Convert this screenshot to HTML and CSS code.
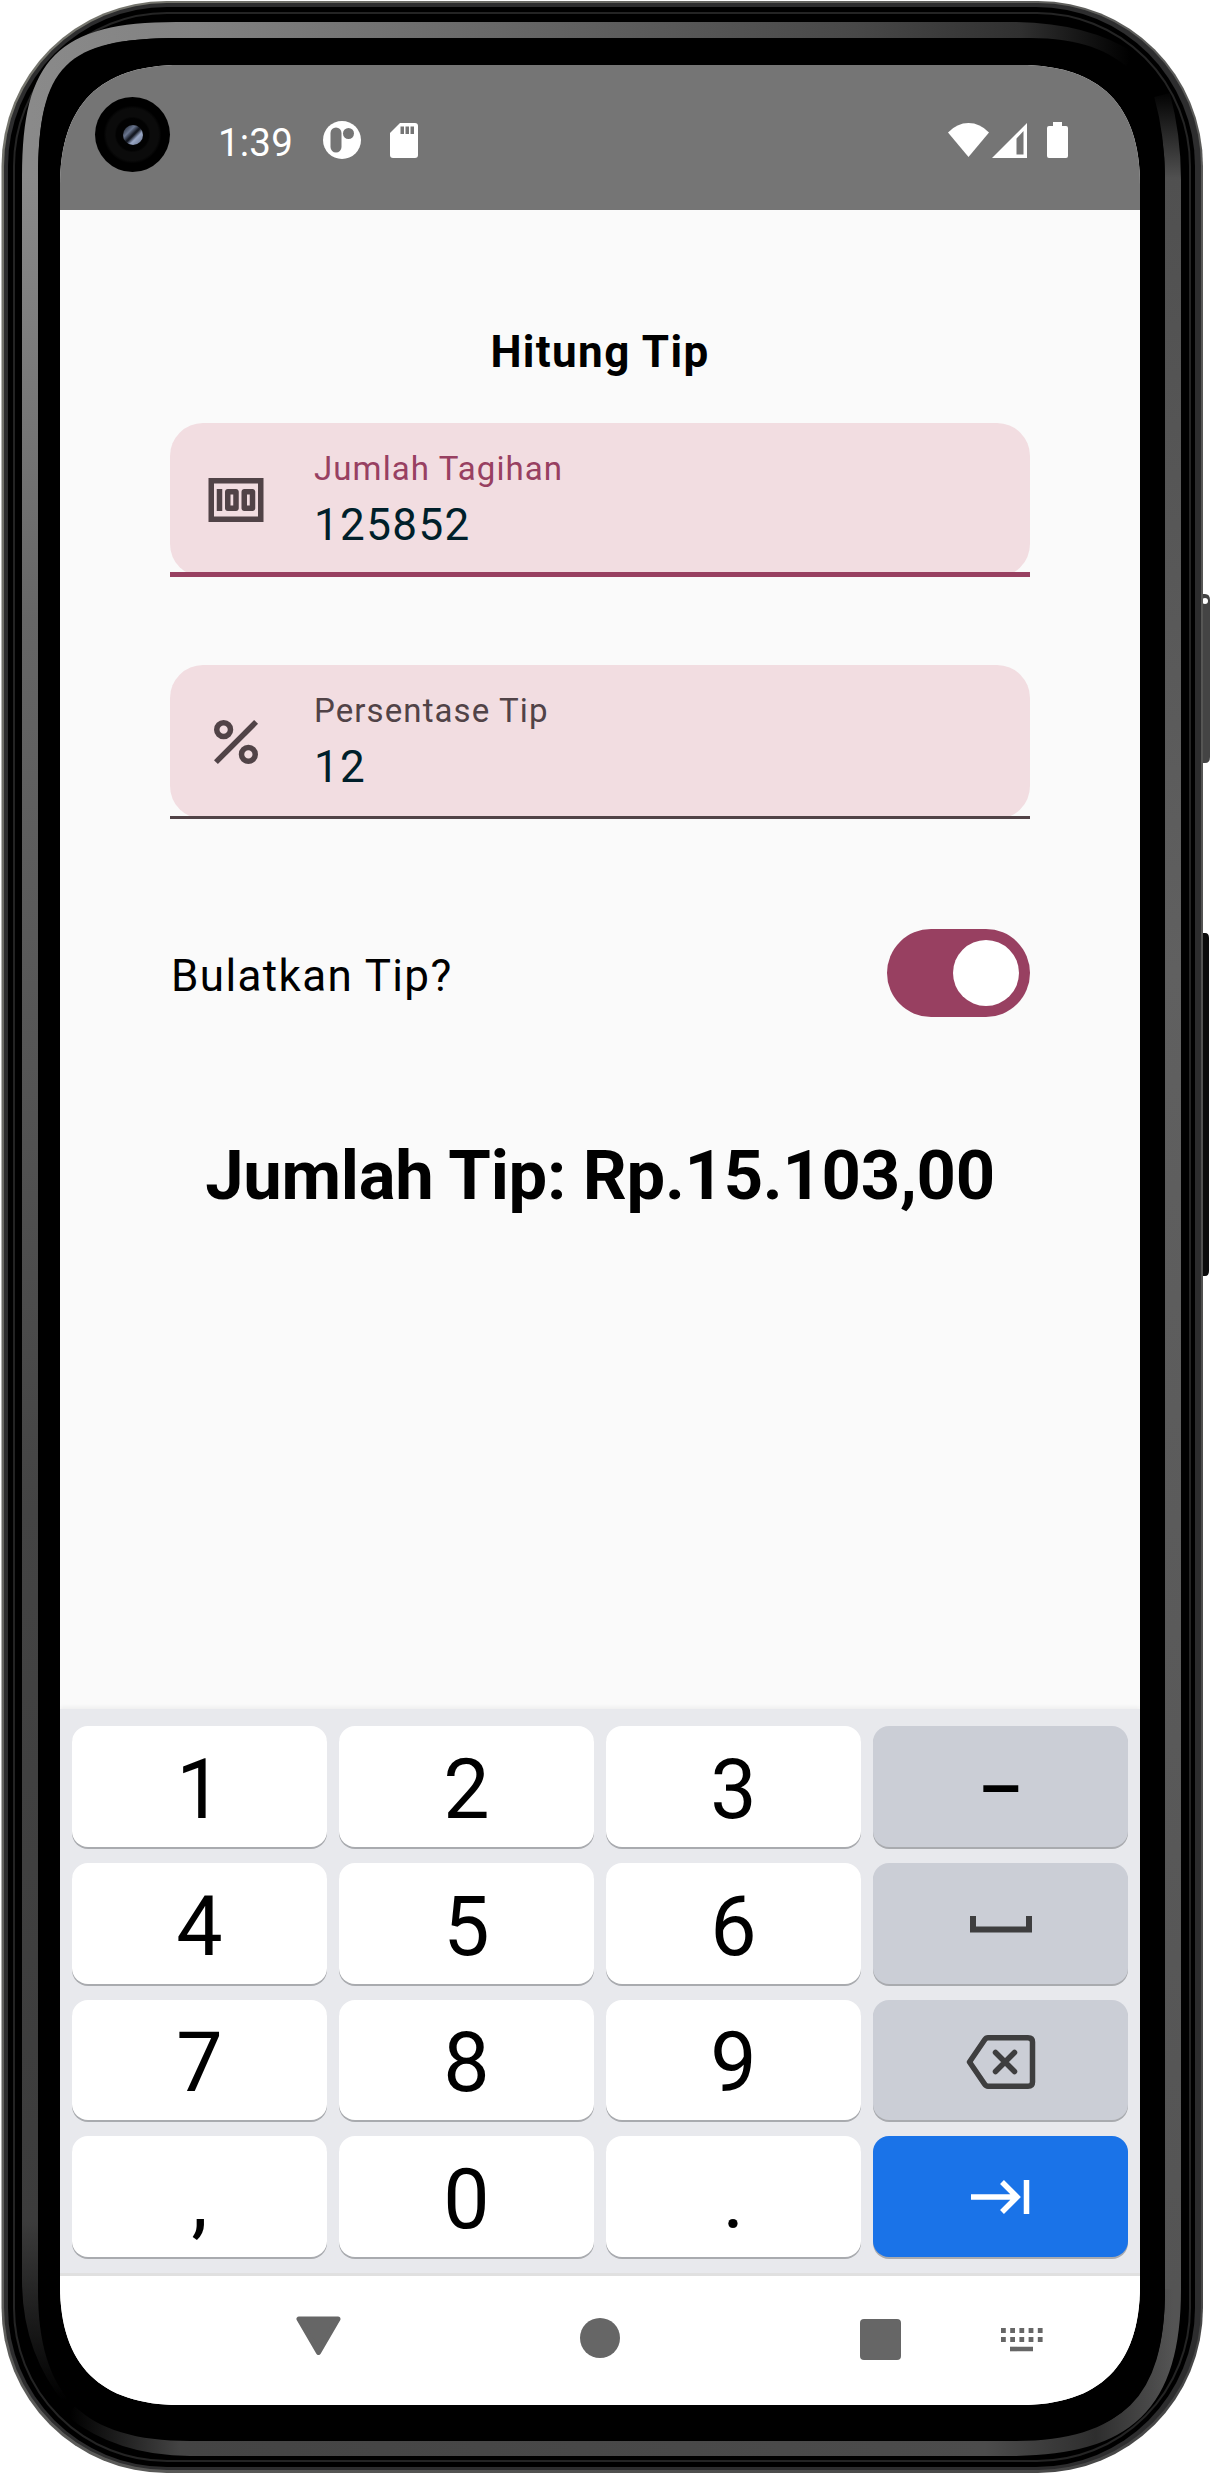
FILE: index.html
```html
<!DOCTYPE html>
<html lang="id">
<head>
<meta charset="utf-8">
<title>Hitung Tip</title>
<link rel="stylesheet" href="styles.css">
</head>
<body>
<div class="device">
  <svg class="bezel" viewBox="0 0 1211 2474" aria-hidden="true">
    <defs>
      <linearGradient id="edge" x1="0" y1="0" x2="1" y2="1">
        <stop offset="0" stop-color="#77776f"/><stop offset="0.5" stop-color="#5c5c5a"/><stop offset="1" stop-color="#454545"/>
      </linearGradient>
      <linearGradient id="left" gradientUnits="userSpaceOnUse" x1="0" y1="175" x2="0" y2="2400">
        <stop offset="0" stop-color="#8a8a8a"/><stop offset="0.2" stop-color="#666"/><stop offset="0.6" stop-color="#444"/><stop offset="0.92" stop-color="#3c3c3c"/><stop offset="1" stop-color="#000"/>
      </linearGradient>
      <linearGradient id="top" gradientUnits="userSpaceOnUse" x1="30" y1="0" x2="1130" y2="0">
        <stop offset="0" stop-color="#8a8a8a"/><stop offset="0.15" stop-color="#828282"/><stop offset="0.4" stop-color="#6a6a6a"/><stop offset="0.75" stop-color="#484848"/><stop offset="0.9" stop-color="#303030"/><stop offset="1" stop-color="#000"/>
      </linearGradient>
      <linearGradient id="right" gradientUnits="userSpaceOnUse" x1="0" y1="90" x2="0" y2="2290">
        <stop offset="0" stop-color="#000"/><stop offset="0.04" stop-color="#505050"/><stop offset="0.4" stop-color="#606060"/><stop offset="1" stop-color="#545454"/>
      </linearGradient>
      <linearGradient id="bottom" gradientUnits="userSpaceOnUse" x1="70" y1="0" x2="1173" y2="0">
        <stop offset="0" stop-color="#000"/><stop offset="0.1" stop-color="#444"/><stop offset="0.83" stop-color="#4c4c4c"/><stop offset="0.93" stop-color="#2e2e2e"/><stop offset="1" stop-color="#545454"/>
      </linearGradient>
    </defs>
    <path d="M1200 594h5q5 0 5 6v157q0 6-5 6h-5z" fill="#444"/>
    <circle cx="1205" cy="601" r="3" fill="#fff"/>
    <path d="M1200 933h5q4 0 4 5v333q0 5-4 5h-5z" fill="#0b0b0b"/>
    <rect x="1.500" y="1" width="1201.500" height="2472" rx="165" fill="url(#edge)"/>
    <rect x="4" y="3" width="1197" height="2467" rx="163" fill="#2d2d2e"/>
    <rect x="8" y="7" width="1187" height="2460" rx="159" fill="#000"/>
    <rect x="14" y="13" width="1176" height="2448" rx="153" fill="none" stroke="#242424" stroke-width="2"/>
    <g fill="none" stroke-width="16">
      <path d="M72 2400Q30 2350 30 2280V175" stroke="url(#left)"/>
      <path d="M30 176C30 63 63 30 176 30H1010Q1085 30 1130 60" stroke="url(#top)"/>
      <path d="M1162 95Q1173 135 1173 180V2290" stroke="url(#right)"/>
      <path d="M72 2410Q120 2448 190 2448H1010C1128 2448 1173 2403 1173 2289" stroke="url(#bottom)"/>
    </g>
    <path d="M38 180C38 65 65 38 180 38H1030C1125 38 1165 85 1165 180V2290C1165 2396 1120 2441 1015 2441H190C83 2441 38 2396 38 2290Z" fill="#000"/>
  </svg>

  <div class="screen">
    <header class="status">
      <div class="camera"><span class="lens"></span></div>
      <span class="clock">1:39</span>
      <svg class="notice" viewBox="0 0 38 38"><circle cx="19" cy="19" r="19" fill="#fff"/><rect x="7.500" y="6.500" width="11" height="25" rx="5.500" fill="#757575"/><circle cx="25.500" cy="12.500" r="5.500" fill="#757575"/></svg>
      <svg class="sdcard" viewBox="0 0 28 35"><path d="M10 0H25Q28 0 28 3V32Q28 35 25 35H3Q0 35 0 32V10Z" fill="#fff"/><path d="M10.500 3.500h3.500v7.500h-3.500zM15.500 3.500h3.500v7.500h-3.500zM20.500 3.500h3.500v7.500h-3.500z" fill="#757575"/></svg>
      <svg class="wifi" viewBox="0 0 41 34"><path d="M0 9.500Q9 0 20.500 0T41 9.500L20.500 34Z" fill="#fff"/></svg>
      <svg class="signal" viewBox="0 0 35 35"><path d="M35 0V35H0ZM31.500 8L24.500 15.500V31.500H31.500Z" fill="#fff" fill-rule="evenodd"/></svg>
      <svg class="battery" viewBox="0 0 21 36"><path d="M6 0h9v4h4q2 0 2 2v28q0 2-2 2H2q-2 0-2-2V6q0-2 2-2h4z" fill="#fff"/></svg>
    </header>

    <main class="content">
      <h1 class="title">Hitung Tip</h1>
      <div class="field focused">
        <svg class="field-icon" viewBox="0 0 24 24"><path fill="currentColor" d="M5 8h2v8H5zm7 0H9c-.55 0-1 .45-1 1v6c0 .55.45 1 1 1h3c.55 0 1-.45 1-1V9c0-.55-.45-1-1-1zm-1 6h-1v-4h1v4zm7-6h-3c-.55 0-1 .45-1 1v6c0 .55.45 1 1 1h3c.55 0 1-.45 1-1V9c0-.55-.45-1-1-1zm-1 6h-1v-4h1v4zM2 4v16h20V4H2zm2 14V6h16v12H4z"/></svg>
        <div class="field-text"><span class="label">Jumlah Tagihan</span><span class="value">125852</span></div>
      </div>
      <div class="field">
        <svg class="field-icon" viewBox="0 0 24 24"><g fill="none" stroke="currentColor" stroke-width="2"><circle cx="7.500" cy="7.500" r="2.500"/><circle cx="16.500" cy="16.500" r="2.500"/><path d="M4.700 19.300L19.300 4.700"/></g></svg>
        <div class="field-text"><span class="label">Persentase Tip</span><span class="value">12</span></div>
      </div>
      <div class="round-row">
        <span class="round-label">Bulatkan Tip?</span>
        <span class="switch"><span class="thumb"></span></span>
      </div>
      <p class="result">Jumlah Tip: Rp.15.103,00</p>
    </main>

    <section class="keypad">
      <div class="key">1</div><div class="key">2</div><div class="key">3</div>
      <div class="key alt"><span class="dash">–</span></div>
      <div class="key">4</div><div class="key">5</div><div class="key">6</div>
      <div class="key alt"><svg class="space-icon" viewBox="0 0 62 17"><path d="M3 0V13.500H59V0" fill="none" stroke="#3e3e3f" stroke-width="6"/></svg></div>
      <div class="key">7</div><div class="key">8</div><div class="key">9</div>
      <div class="key alt"><svg class="back-icon" viewBox="0 0 70 54"><g fill="none" stroke="#3e3e3f" stroke-width="5.500" stroke-linejoin="round" stroke-linecap="round"><path d="M22 2.750H62Q66.500 2.750 66.500 7V47Q66.500 51.250 62 51.250H22Q20 51.250 18.500 49L3.500 27L18.500 5Q20 2.750 22 2.750Z"/><path d="M29.500 17.500L48.500 36.500M48.500 17.500L29.500 36.500"/></g></svg></div>
      <div class="key">,</div><div class="key">0</div><div class="key">.</div>
      <div class="key go"><svg class="next-icon" viewBox="0 0 59 34"><path d="M0 17H45M31 2L46 17L31 32M55.500 0V34" fill="none" stroke="#fff" stroke-width="5.500"/></svg></div>
    </section>

    <nav class="navbar">
      <svg class="nav-back" viewBox="0 0 45 40"><path d="M3 3H42L22.500 36.500Z" fill="#666" stroke="#666" stroke-width="5" stroke-linejoin="round"/></svg>
      <span class="nav-home"></span>
      <span class="nav-recent"></span>
      <svg class="nav-ime" viewBox="0 0 42 24"><path d="M0 2.500H42M0 11.500H42" stroke="#666" stroke-width="4.800" stroke-dasharray="4.800 4.400"/><path d="M9 21H32" stroke="#666" stroke-width="4.600"/></svg>
    </nav>
  </div>
</div>
</body>
</html>
```
FILE: styles.css
```css
* { box-sizing: border-box; }
body { margin: 0; background: #fff; font-family: Roboto, sans-serif; color: #000; }
svg { display: block; flex: none; }

.device { position: relative; width: 1211px; height: 2474px; padding: 65px 71px 69px 60px; overflow: hidden; }
.bezel { position: absolute; inset: 0; width: 1211px; height: 2474px; }

.screen {
  position: relative; display: flex; flex-direction: column;
  width: 1080px; height: 2340px; background: #fafafa;
  clip-path: path("M0 120C0 40 40 0 120 0H960C1040 0 1080 40 1080 120V2220C1080 2300 1040 2340 960 2340H120C40 2340 0 2300 0 2220Z");
}

.status { display: flex; height: 145px; flex: none; background: #757575; padding: 32px 72px 0 35px; }
.camera { display: flex; align-items: center; justify-content: center; width: 75px; height: 75px; border-radius: 50%; background: radial-gradient(circle, #020202 0 16px, #0b0b0b 18px 26px, #000 29px); }
.lens { width: 20px; height: 20px; border-radius: 50%; background: linear-gradient(135deg, #3a4252 0 15%, #6a7690 32%, #151923 48% 52%, #9aa8c6 66%, #5c6880); }
.clock { margin: 23px 0 0 48px; width: 75px; color: #fff; font-size: 38.500px; line-height: 45px; letter-spacing: 0.2px; }
.notice { width: 38px; height: 38px; margin: 24px 0 0 30px; }
.sdcard { width: 28px; height: 35px; margin: 26px 0 0 29px; }
.wifi { width: 41px; height: 34px; margin: 26px 0 0 auto; }
.signal { width: 35px; height: 35px; margin: 26px 0 0 3px; }
.battery { width: 21px; height: 36px; margin: 25px 0 0 20px; }

.content { display: flex; flex-direction: column; flex: 1; padding: 109px 110px 0; }
.title { margin: 0; text-align: center; font-size: 44px; line-height: 66px; font-weight: 700; letter-spacing: 1.375px; }
.field { display: flex; align-items: flex-start; height: 154px; margin-top: 38px; padding: 44px 33px 0; border-radius: 33px; background: #f2dde1; position: relative; color: #514347; }
.field + .field { margin-top: 88px; }
.field::after { content: ""; position: absolute; left: 0; right: 0; bottom: 0; height: 3px; background: #514347; }
.field.focused::after { height: 5.500px; background: #984061; }
.field-icon { width: 66px; height: 66px; }
.field-text { display: flex; flex-direction: column; margin: -20px 0 0 45px; }
.label { font-size: 33px; line-height: 44px; letter-spacing: 1.1px; }
.focused .label { color: #984061; }
.value { margin-top: 1px; font-size: 44px; line-height: 66px; letter-spacing: 1.375px; color: #001f2a; }
.round-row { display: flex; align-items: center; justify-content: space-between; height: 132px; margin-top: 88px; }
.round-label { font-size: 44px; line-height: 66px; letter-spacing: 1.375px; padding: 6px 0 0 1px; }
.switch { display: flex; justify-content: flex-end; align-items: center; width: 143px; height: 88px; padding: 11px; border-radius: 44px; background: #984061; }
.thumb { width: 66px; height: 66px; border-radius: 50%; background: #fff; }
.result { margin: 93px 0 0; text-align: center; white-space: nowrap; font-size: 68.750px; line-height: 88px; font-weight: 700; letter-spacing: -0.300px; }

.keypad { display: grid; grid-template-columns: repeat(4, 1fr); grid-template-rows: repeat(4, 1fr); gap: 16px 12px; height: 567px; flex: none; padding: 17px 12px 16px; background: #e8e9ed; border-bottom: 3px solid #e0e0e0; box-shadow: 0 -2px 4px rgba(0,0,0,.05); }
.key { display: flex; align-items: center; justify-content: center; border-radius: 16px; background: #fff; box-shadow: 0 2px 0 #a9abaf; font-size: 82.500px; line-height: 96px; padding-top: 7px; }
.key.alt { background: #cbced6; padding: 0; }
.key.go { background: #1a73e8; padding: 0; }
.dash { font-size: 70px; font-weight: 500; line-height: 96px; padding-top: 7px; }
.space-icon { width: 62px; height: 17px; margin-top: 2px; }
.back-icon { width: 70px; height: 54px; margin-top: 4px; }
.next-icon { width: 59px; height: 34px; }

.navbar { display: flex; height: 129px; flex: none; background: #fff; padding-left: 236px; }
.nav-back { width: 45px; height: 40px; margin-top: 40px; }
.nav-home { width: 40px; height: 40px; margin: 42px 0 0 239px; border-radius: 50%; background: #666; }
.nav-recent { width: 41px; height: 41px; margin: 43px 0 0 240px; border-radius: 4px; background: #666; }
.nav-ime { width: 42px; height: 24px; margin: 52px 0 0 100px; }
```
